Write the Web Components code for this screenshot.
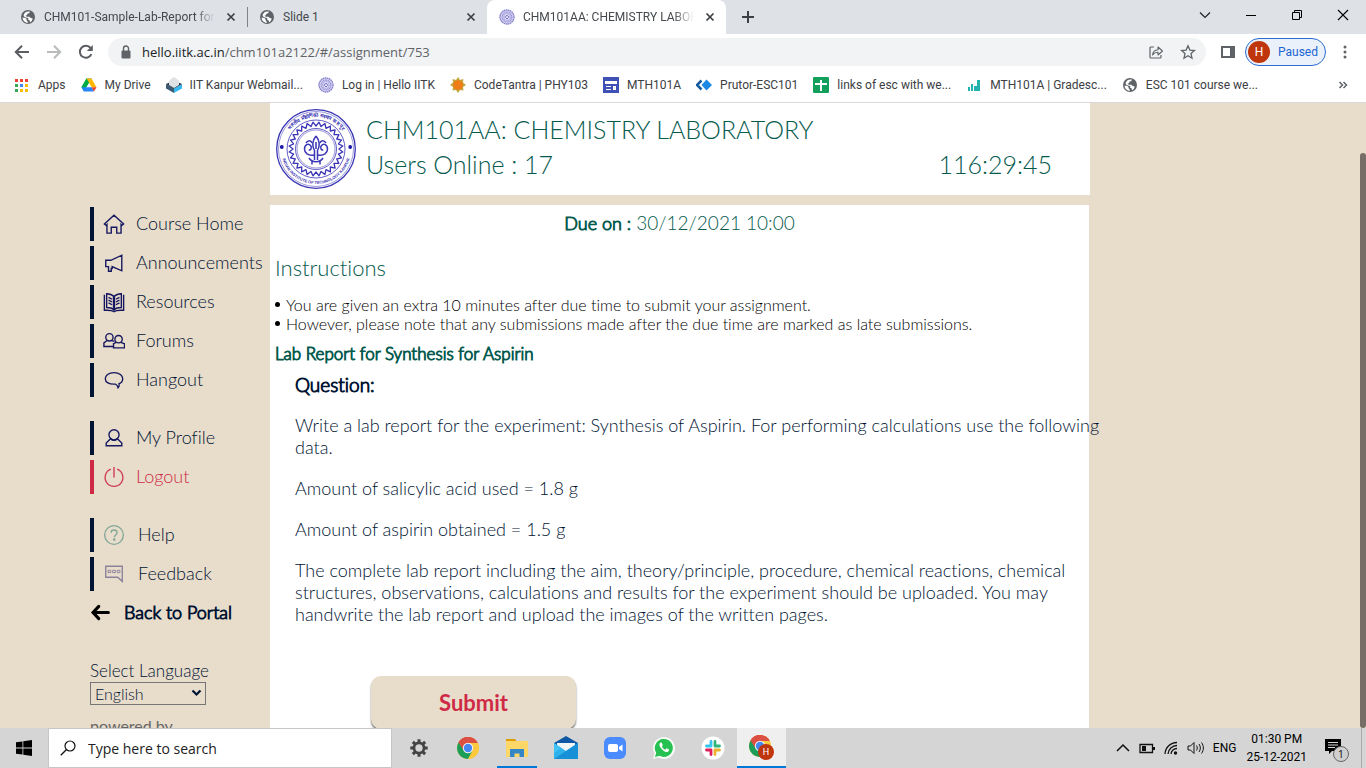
<!DOCTYPE html>
<html lang="en">
<head>
<meta charset="utf-8">
<title>CHM101AA: CHEMISTRY LABORATORY</title>
<style>
  html, body { margin: 0; height: 100%; }
  body { font-family: Roboto, "Open Sans", sans-serif; font-size: 12px; overflow: hidden; }
</style>
</head>
<body>
<desktop-screen></desktop-screen>

<script>
const GLOBE = '<circle cx="8" cy="8" r="7" fill="#5f6368"/><path d="M2.6 8.6c1.2.3 2.5.2 3.4.9.8.6.2 1.500 1 2.200.6.600.9 1.300.7 2.200C4.800 13.700 2.600 11.500 2.600 8.600ZM5.200 3.500 C6.400 2.600 8.500 2.200 10 2.700 L9 4.200 7.300 4.800 7 6.300 5.600 6.500 6.600 7.800 9.200 7.700 10.800 9.100 12.700 9.400C12.300 11.300 11.300 12.600 10 13.200 L9.700 11.600 8 10.400 8.400 9 5.700 8.400 3.800 7.300 3.700 5.500Z" fill="#fff"/>';
const MINI_SEAL = '<circle cx="8" cy="8" r="7.500" fill="#d4d1f0"/><circle cx="8" cy="8" r="7" fill="none" stroke="#8680cc" stroke-width="1.300" stroke-dasharray="1.500 .6"/><circle cx="8" cy="8" r="4.800" fill="none" stroke="#8f8ad4" stroke-width="1.200" stroke-dasharray="1 .6"/><circle cx="8" cy="8" r="3.300" fill="#eceafa" stroke="#8f8ad4" stroke-width=".6"/><path d="M6.200 9V7.600L8 6.400l1.800 1.200V9M7 9.500h2" fill="none" stroke="#6d66bd"/>';
const CHROME = '<circle cx="12" cy="12" r="11" fill="#fbc93d"/><path d="M12 12 L2.500 6.500A11 11 0 0 1 21.500 6.500Z" fill="#dc5044"/><path d="M12 12L2.500 6.500A11 11 0 0 0 12 23l5-8.500Z" fill="#1c9d58"/><path d="M12 7h9.800A11 11 0 0 1 12 23l4.500-8.300Z" fill="#fbc93d"/><path d="M12 7h9.800A11 11 0 0 0 2.500 6.500L7.600 14.500Z" fill="#dc5044"/><circle cx="12" cy="12" r="5.200" fill="#f4f4f4"/><circle cx="12" cy="12" r="4.200" fill="#4587f3"/>';
const ICONS = {
  globe: [16, GLOBE],
  miniseal: [16, MINI_SEAL],
  cross: [16, '<path d="M4.500 4.500l7 7m0-7l-7 7" stroke="#3c4043" stroke-width="1.700" fill="none"/>'],
  plus: [16, '<path d="M8 2v12M2 8h12" stroke="#3c4043" stroke-width="2" fill="none"/>'],
  down: [16, '<path d="M3 5.500l5 5 5-5" stroke="#222" stroke-width="1.200" fill="none"/>'],
  minimise: [16, '<path d="M3 8.500h10" stroke="#000" fill="none"/>'],
  restore: [16, '<path d="M3.500 5.500h7v7h-7zM5.500 5.500v-2h7v7h-2" stroke="#000" fill="none"/>'],
  shut: [16, '<path d="M3 3l10 10M13 3L3 13" stroke="#000" stroke-width="1.100" fill="none"/>'],
  back: [16, '<path d="M15 8H2.500M8 1.800L1.800 8 8 14.200" stroke="#5a5d61" stroke-width="2" fill="none"/>'],
  forward: [16, '<path d="M1 8h12.500M8 1.800L14.200 8 8 14.200" stroke="#b8babc" stroke-width="2" fill="none"/>'],
  reload: [16, '<path d="M13.400 10.200A6 6 0 1 1 12.600 4" stroke="#5a5d61" stroke-width="2" fill="none"/><path d="M14.800 1v6H8.800z" fill="#5a5d61"/>'],
  lock: [16, '<rect x="3.500" y="6.500" width="9" height="8" rx="1" fill="#5f6368"/><path d="M5.500 7V4.500a2.500 2.500 0 0 1 5 0V7" stroke="#5f6368" stroke-width="1.400" fill="none"/>'],
  share: [16, '<path d="M6 3H3a1 1 0 0 0-1 1v9a1 1 0 0 0 1 1h9a1 1 0 0 0 1-1v-2" stroke="#5f6368" stroke-width="1.200" fill="none"/><path d="M4.500 11C5 7.500 7 6 10 5.800V3l4.500 4-4.500 4V8.300C7.500 8.300 6 9 4.500 11Z" stroke="#5f6368" stroke-width="1.100" fill="none" stroke-linejoin="round"/>'],
  star: [16, '<path d="M8 1.800l1.900 4.300 4.600.4-3.500 3.100 1 4.600L8 11.800l-4 2.400 1-4.600L1.500 6.500l4.600-.4Z" stroke="#5f6368" stroke-width="1.300" fill="none"/>'],
  panel: [16, '<path d="M1 2h14v12H1z" fill="#5f6368"/><path d="M3 4h7v8H3z" fill="#fff"/>'],
  dots: [16, '<circle cx="8" cy="3" r="1.500" fill="#5f6368"/><circle cx="8" cy="8" r="1.500" fill="#5f6368"/><circle cx="8" cy="13" r="1.500" fill="#5f6368"/>'],
  more: [16, '<path d="M4.500 5l3 3-3 3M8.500 5l3 3-3 3" stroke="#5f6368" stroke-width="1.500" fill="none"/>'],
  apps: [16, '<path d="M1 2h3v3H1zM6 2h3v3H6zM11 2h3v3h-3zM1 7h3v3H1z" fill="#ea4335"/><path d="M1 7h3v3H1zM1 12h3v3H1z" fill="#34a853"/><path d="M6 7h3v3H6z" fill="#4285f4"/><path d="M6 12h3v3H6zM11 12h3v3h-3zM11 7h3v3h-3z" fill="#fbbc05"/>'],
  drive: [16, '<path d="M5.500 1.500L8 5.900 3 14.500.500 10.200Z" fill="#00ac47"/><path d="M5.500 1.500h5L8 5.900Z" fill="#00832d"/><path d="M10.500 1.500l5 8.700h-5L5.500 1.500Z" fill="#ffba00"/><path d="M5.500 1.500L8 5.900l-2.500 4.300H.500Z" fill="#00ac47"/><path d="M8 5.900l2.500 4.300h-5Z" fill="#fff"/><path d="M.500 10.200h10L13 14.500H3Z" fill="#2684fc"/><path d="M10.500 10.200h5L13 14.500Z" fill="#ea4335"/>'],
  webmail: [16, '<path d="M0 7l8 4v5L0 11.500Z" fill="#3d5a73"/><path d="M16 7l-8 4v5l8-4.500Z" fill="#38b6ee"/><path d="M0 7l8-3.500L16 7l-8 4.500Z" fill="#2b3742"/><path d="M3 3.500L8 0l5 3.500V8l-5 3-5-3Z" fill="#dfe2e4"/>'],
  sun: [16, '<path d="M8 0l2 3 3.500-1L13 5.500l3 2.500-3 2 .5 3.500-3.500-.5-2 3-2-3-3.500.5L3 10 0 8l3-2.500L2.500 2 6 3Z" fill="#c2a63c"/><circle cx="8" cy="8" r="4.800" fill="#ef7d17"/>'],
  sites: [16, '<path d="M0 0h16v16H0z" fill="#3f51b5"/><path d="M2 4h12v3H2zM3 9h5v1H3zM10 9h3v4h-3zM3 12h5v1H3z" fill="#fff"/>'],
  prutor: [16, '<path d="M5.500 3.500L1 8l4.500 4.500" stroke="#165b9c" stroke-width="2.500"/><path d="M10.500 2.500L16 8l-5.500 5.500L5.500 8Z" fill="#1e88e5"/>'],
  sheets: [16, '<rect width="16" height="16" rx="1" fill="#12a05c"/><path d="M7 3h2v11H7zM2 6h12v2H2z" fill="#fff"/>'],
  bars: [16, '<path d="M2 10h2v4H2zM5 7h2v7H5zM8 9h3v5H8zM11 3h3v11h-3z" fill="#25b1ad"/>'],
  home: [24, '<path d="M1.500 12L12 2.500 22.500 12l-1.800 1.500-1-1V22H15v-6.500H9V22H4.300v-9.500l-1 1Z"/>'],
  horn: [24, '<path d="M3 9h5.500L20.500 3.500v17L10 16v2H9v3H6v-5H3Z"/>'],
  book: [24, '<path d="M4 3v15c3 0 6 .5 8 2.500 2-2 5-2.500 8-2.500V3c-3 0-6 1-8 3-2-2-5-3-8-3ZM1.500 4v17c4 0 8-.5 10.500 1.500C14.500 20.500 18.500 21 22.500 21V4M6 7l4 2M6 10l4 2M6 13l4 2M18 7l-4 2M18 10l-4 2M18 13l-4 2"/><path d="M12 6v14" stroke-width="2.500"/>'],
  people: [24, '<circle cx="7" cy="8" r="4"/><path d="M4.500 11.500L1 14v4h10M9.500 11.500l3 1"/><circle cx="17" cy="10" r="4"/><path d="M14.500 13.500L11.500 15v4.500h12V15L19.500 13.500"/>'],
  chat: [24, '<path d="M12 4c6 0 9.500 3 9.500 6.500 0 2.500-1.500 4.500-4 5.500.5 1.500.5 3-1 4.500-.5-2-1.500-3.500-3-4-7 .5-11-2-11-6C2.500 7 6 4 12 4Z"/>'],
  person: [24, '<circle cx="12" cy="8.500" r="5.500"/><path d="M8.500 12.500l-5 5V20.500h17v-3l-5-5M8.500 13c2 2 5 2 7 0"/>'],
  power: [24, '<path d="M8.500 3.500a9.700 9.700 0 1 0 7 0M12 1v11.500"/>'],
  help: [24, '<circle cx="12" cy="12" r="10.200"/><path d="M8.800 9.500C8.800 7.500 10 6.500 12 6.500s3.300 1.300 3.300 3c0 2.500-3 2.500-3 5"/><circle cx="12.200" cy="17" r=".7"/>'],
  feedback: [24, '<path d="M3 3.500h18V20l-5-4.500H3Z"/><path d="M5.500 8h3v2.500h-3zM10.500 8h3v2.500h-3zM15.500 8h3v2.500h-3z" stroke-width="1"/>'],
  arrowleft: [24, '<path d="M21 12H4M10 5L3.500 12l6.500 7" stroke-width="3.500" stroke-linecap="round"/>'],
  windows: [16, '<path d="M0 2.300l6.500-.9v6.200H0zM7.300 1.300L16 0v7.600H7.300zM0 8.400h6.500v6.200L0 13.700zM7.300 8.400H16V16l-8.700-1.200z" fill="#000"/>'],
  search: [16, '<circle cx="10" cy="6" r="5" stroke="#111" stroke-width="1.200" fill="none"/><path d="M6.500 9.500L.8 15.200" stroke="#111" stroke-width="1.300"/>'],
  gear: [24, '<circle cx="12" cy="12" r="5.500" stroke="#444" stroke-width="3" fill="none"/><path d="M12 2.500V6M12 18v3.500M2.500 12H6M18 12h3.500M5.300 5.300l2.500 2.500M16.200 16.200l2.500 2.500M18.700 5.300l-2.500 2.500M7.800 16.200l-2.500 2.500" stroke="#444" stroke-width="3.200"/>'],
  chrome: [24, CHROME],
  folder: [24, '<path d="M1 3h9l2 3H1z" fill="#e09b00"/><path d="M1 5h22v16H1z" fill="#ffd768"/><path d="M5 21v-8h14v8h-4.500v-3.500h-5V21z" fill="#3486c7"/>'],
  mail: [24, '<path d="M12 0l12 7v4H0V7Z" fill="#0f58a5"/><path d="M3 7h18v8H3z" fill="#f3f5f6"/><path d="M0 7l12 8 12-8v16H0Z" fill="#2fb1ec"/><path d="M0 23L24 7v16Z" fill="#1790d8"/><path d="M0 7l7 5L0 17Z" fill="#41c4f4"/>'],
  zoom: [24, '<rect x="1" y="1" width="22" height="22" rx="6" fill="#4a8cff"/><rect x="5" y="8" width="10" height="8" rx="2" fill="#fff"/><path d="M16 11l3.500-2.500v7L16 13Z" fill="#fff"/>'],
  whatsapp: [24, '<path d="M1 23l1.500-5.500A11 11 0 1 1 6.500 21.500Z" fill="#f6fbf6"/><path d="M3 21l1.200-4.300A9 9 0 1 1 7.500 19.800Z" fill="#27c151"/><path d="M8.500 6.500c-1.500 1-1.500 3 .3 5.400s4.500 4.500 6.500 4c1.500-.5 1.900-1.700 1.700-2.400l-2.400-1.200-1.200 1.400c-1.500-.6-2.800-1.700-3.500-3.200l.9-1.100-1-2.600Z" fill="#fff"/>'],
  slack: [24, '<circle cx="12" cy="12" r="11.500" fill="#fff"/><g stroke-width="2.800" stroke-linecap="round"><path d="M10 5.500V10M5.500 10H10" stroke="#36c5f0"/><path d="M14 5.500V10M14 10h4.500" stroke="#2eb67d"/><path d="M14 14v4.500M14 14h4.500" stroke="#ecb22e"/><path d="M10 14v4.500M5.500 14H10" stroke="#e01e5a"/></g>'],
  chromeuser: [28, '<g>' + CHROME + '</g><circle cx="18" cy="18" r="8" fill="#bf360c"/><text x="18" y="21" font-family="Roboto, sans-serif" font-size="9" text-anchor="middle" fill="#fff">H</text>'],
  up: [16, '<path d="M2 11l6-6 6 6" stroke="#111" stroke-width="1.500" fill="none"/>'],
  battery: [16, '<path d="M1 4.500h12.500v8H1z" stroke="#111" stroke-width="1.300" fill="none"/><path d="M3 6h4v5H3zM14 7h2v3h-2z" fill="#111"/>'],
  wifi: [16, '<path d="M2 14A12 12 0 0 1 14 2.500M5 14a9 9 0 0 1 9-8.500M8 14a6 6 0 0 1 6-5.500" stroke="#111" stroke-width="1.300" fill="none"/><circle cx="12.500" cy="13" r="1.700" fill="#111"/>'],
  sound: [18, '<path d="M1 7h2.500L7 3.500v11L3.500 11H1Z" stroke="#111" fill="none"/><path d="M9.500 6.500c1 1.500 1 3.500 0 5M12 5c1.800 2.500 1.800 5.500 0 8M14.500 3.500c2.500 3.500 2.500 7.500 0 11" stroke="#111" fill="none"/>'],
  notice: [28, '<path d="M2 5h16v12h-9L6 20v-3H2Z" fill="#000"/><path d="M5 8.500h10M5 11h10M5 13.500h7" stroke="#d5d5d5"/><circle cx="18" cy="20" r="7.500" fill="#cfcfcf" stroke="#666"/><text x="18" y="24" font-family="Open Sans, sans-serif" font-size="11" text-anchor="middle" fill="#111">1</text>']
};

function define(name, markup) {
  customElements.define(name, class extends HTMLElement {
    connectedCallback() {
      if (this.shadowRoot) return;
      const root = this.attachShadow({ mode: 'open' });
      root.innerHTML = typeof markup === 'function' ? markup(this) : markup;
    }
  });
}

/* A square line or colour icon; "size" sets its side in pixels. */
define('ui-icon', el => {
  const [box, body] = ICONS[el.getAttribute('name')];
  const size = el.getAttribute('size') || box;
  return `<style>
    :host { display: inline-flex; flex: none; }
    svg { display: block; fill: none; stroke: none; }
    svg.line { stroke: currentColor; stroke-width: 1.500; }
  </style><svg class="${el.hasAttribute('line') ? 'line' : ''}" width="${size}" height="${size}" viewBox="0 0 ${box} ${box}" aria-hidden="true">${body}</svg>`;
});

define('browser-tab', el => `<style>
  :host { display: flex; align-items: center; flex: 0 1 239px; min-width: 0; height: 34px; padding: 0 8px 0 11px; box-sizing: border-box; gap: 8px; color: #45494d; }
  :host([first]) { flex-basis: 247px; padding-left: 20px; }
  :host([active]) { background: #fff; border-radius: 8px 8px 0 0; padding-left: 12px; }
  span { flex: 1; overflow: hidden; white-space: nowrap; }
  :host([fade]) span { -webkit-mask-image: linear-gradient(90deg, #000 88%, transparent); mask-image: linear-gradient(90deg, #000 88%, transparent); }
  button { border: 0; background: none; padding: 0; display: flex; }
</style><ui-icon name="${el.getAttribute('icon')}"></ui-icon><span><slot></slot></span><button aria-label="Close tab"><ui-icon name="cross"></ui-icon></button>`);

define('tab-strip', `<style>
  :host { display: flex; align-items: center; height: 34px; background: #dee1e6; }
  .sep { width: 1px; height: 20px; background: #808488; }
  button { border: 0; background: none; padding: 0; display: flex; }
  .new { margin-left: 14px; }
  .win { margin-left: auto; display: flex; gap: 30px; padding: 0 15px 5px 0; }
</style>
<browser-tab icon="globe" first fade>CHM101-Sample-Lab-Report for</browser-tab>
<div class="sep"></div>
<browser-tab icon="globe">Slide 1</browser-tab>
<browser-tab icon="miniseal" active fade>CHM101AA: CHEMISTRY LABORATORY</browser-tab>
<button class="new" aria-label="New tab"><ui-icon name="plus"></ui-icon></button>
<div class="win">
  <button aria-label="Search tabs"><ui-icon name="down"></ui-icon></button>
  <button aria-label="Minimise"><ui-icon name="minimise"></ui-icon></button>
  <button aria-label="Restore"><ui-icon name="restore"></ui-icon></button>
  <button aria-label="Close"><ui-icon name="shut"></ui-icon></button>
</div>`);

define('tool-bar', `<style>
  :host { display: flex; align-items: center; height: 36px; background: #fff; padding: 0 14px; gap: 16px; }
  button { border: 0; background: none; padding: 0; display: flex; align-items: center; }
  .omni { flex: 1; display: flex; align-items: center; height: 28px; border-radius: 14px; background: #f1f3f4; padding: 0 10px; gap: 8px; margin: 0 -2px; }
  .url { flex: 1; position: relative; display: flex; align-items: center; height: 28px; font: 13px "Open Sans", sans-serif; }
  .url input { position: absolute; inset: 0; width: 100%; border: 0; padding: 0; background: none; font: inherit; color: transparent; }
  .url span { color: #5f6368; white-space: nowrap; pointer-events: none; }
  .url b { font-weight: 400; color: #202124; }
  .share { margin-right: 8px; }
  .me { height: 28px; border: 1px solid #2b6bd0; border-radius: 14px; background: #ebf1fb; color: #1a66d2; font: 12px Roboto, sans-serif; padding: 0 8px 0 2px; gap: 8px; margin: 0 -5px 0 -7px; width: 81px; box-sizing: border-box; }
  .me i { font-style: normal; width: 22px; height: 22px; border-radius: 50%; background: #bf360c; color: #fff; line-height: 22px; text-align: center; flex: none; }
  .menu { margin-right: -1px; }
</style>
<button aria-label="Back"><ui-icon name="back"></ui-icon></button>
<button aria-label="Forward"><ui-icon name="forward"></ui-icon></button>
<button aria-label="Reload"><ui-icon name="reload"></ui-icon></button>
<div class="omni">
  <ui-icon name="lock"></ui-icon>
  <label class="url"><span><b>hello.iitk.ac.in</b>/chm101a2122/#/assignment/753</span><input type="text" aria-label="Address"></label>
  <button class="share" aria-label="Share"><ui-icon name="share"></ui-icon></button>
  <button aria-label="Bookmark"><ui-icon name="star"></ui-icon></button>
</div>
<button aria-label="Side panel"><ui-icon name="panel"></ui-icon></button>
<button class="me"><i>H</i>Paused</button>
<button class="menu" aria-label="Menu"><ui-icon name="dots"></ui-icon></button>`);

define('bookmark-link', el => `<style>
  :host { display: block; flex: none; }
  a { display: flex; align-items: center; gap: 8px; color: #3c4043; text-decoration: none; white-space: nowrap; }
</style><a href="#"><ui-icon name="${el.getAttribute('icon')}"></ui-icon><span><slot></slot></span></a>`);

define('bookmark-bar', `<style>
  :host { display: flex; align-items: center; gap: 15px; height: 33px; padding: 0 15px 3px 14px; background: #fff; border-bottom: 1px solid #d8dadd; box-sizing: border-box; }
  button { border: 0; background: none; padding: 0; margin-left: auto; display: flex; }
</style>
<bookmark-link icon="apps">Apps</bookmark-link>
<bookmark-link icon="drive">My Drive</bookmark-link>
<bookmark-link icon="webmail">IIT Kanpur Webmail...</bookmark-link>
<bookmark-link icon="miniseal">Log in | Hello IITK</bookmark-link>
<bookmark-link icon="sun">CodeTantra | PHY103</bookmark-link>
<bookmark-link icon="sites">MTH101A</bookmark-link>
<bookmark-link icon="prutor">Prutor-ESC101</bookmark-link>
<bookmark-link icon="sheets">links of esc with we...</bookmark-link>
<bookmark-link icon="bars">MTH101A | Gradesc...</bookmark-link>
<bookmark-link icon="globe">ESC 101 course we...</bookmark-link>
<button aria-label="More bookmarks"><ui-icon name="more"></ui-icon></button>`);

define('nav-item', el => `<style>
  :host { display: block; color: #001433; }
  :host([tone=red]) { color: #cf2a45; }
  a { display: flex; align-items: center; gap: 11px; height: 34px; box-sizing: border-box; padding-left: 9px; border-left: 4px solid currentColor; color: inherit; text-decoration: none; font-size: 18px; white-space: nowrap; }
  :host([wide]) a { gap: 13px; }
  span { padding-bottom: 2px; }
  ui-icon { color: ${el.getAttribute('ink') || '#14175f'}; }
</style><a href="#"><ui-icon line size="22" name="${el.getAttribute('icon')}"></ui-icon><span><slot></slot></span></a>`);

define('language-picker', `<style>
  :host { display: flex; flex-direction: column; align-items: flex-start; font-size: 17px; line-height: 22px; color: #001433; }
  .box { position: relative; width: 116px; }
  select { appearance: none; width: 100%; height: 23px; border: 1px solid #767676; border-radius: 0; background: transparent; padding: 0 4px; color: inherit; font: 300 16px Lato, sans-serif; display: block; }
  svg { position: absolute; right: 4px; top: 7px; pointer-events: none; }
  p { margin: 10px 0 0; font-size: 16px; font-weight: 400; color: #666; }
</style>
<label for="lang">Select Language</label>
<div class="box"><select id="lang"><option>English</option></select>
<svg width="11" height="8" viewBox="0 0 11 8"><path d="M1.500 1.500l4 4 4-4" fill="none" stroke="#001433" stroke-width="2.200"/></svg></div>
<p>powered by</p>`);

define('side-nav', `<style>
  :host { display: block; padding-top: 104px; }
  nav { display: grid; gap: 5px; margin-bottom: 24px; }
  nav:last-of-type { margin-bottom: 4px; }
  .portal { display: flex; align-items: center; gap: 13px; height: 34px; color: #001433; text-decoration: none; font-size: 18px; -webkit-text-stroke: 1px currentColor; white-space: nowrap; }
  .portal ui-icon { color: #000; }
  language-picker { margin-top: 31px; }
</style>
<nav aria-label="Course">
  <nav-item icon="home">Course Home</nav-item>
  <nav-item icon="horn">Announcements</nav-item>
  <nav-item icon="book">Resources</nav-item>
  <nav-item icon="people">Forums</nav-item>
  <nav-item icon="chat">Hangout</nav-item>
</nav>
<nav aria-label="Account">
  <nav-item icon="person">My Profile</nav-item>
  <nav-item icon="power" tone="red" ink="#cf3d52">Logout</nav-item>
</nav>
<nav aria-label="Support">
  <nav-item icon="help" wide ink="#82a898">Help</nav-item>
  <nav-item icon="feedback" wide ink="#8c829b">Feedback</nav-item>
</nav>
<a class="portal" href="#"><ui-icon line size="21" name="arrowleft"></ui-icon>Back to Portal</a>
<language-picker></language-picker>`);

/* Institute seal: lettered ring, toothed gear and the emblem in the middle. */
define('course-seal', () => {
  const n = 28, pts = [];
  for (let i = 0; i < n * 2; i++) {
    const a = Math.PI * i / n, r = i % 2 ? 27 : 23;
    pts.push((40 + r * Math.cos(a)).toFixed(1) + ',' + (40 + r * Math.sin(a)).toFixed(1));
  }
  return `<style>
    :host { display: block; flex: none; }
    svg { display: block; }
    text { font-family: "Liberation Sans", sans-serif; font-weight: 700; fill: #3a35b4; }
  </style>
  <svg width="80" height="80" viewBox="0 0 80 80" fill="none" stroke="#3a35b4" role="img" aria-label="IIT Kanpur seal">
    <circle cx="40" cy="40" r="39.300" stroke-width="1.300"/><circle cx="40" cy="40" r="37.500" stroke-width=".5"/>
    <circle cx="40" cy="40" r="29" stroke-width=".8"/>
    <polygon points="${pts.join(' ')}" stroke-width="1.300" stroke-linejoin="round"/>
    <circle cx="40" cy="40" r="20.500" stroke-width=".8"/><circle cx="40" cy="40" r="19" stroke-width=".5"/>
    <circle cx="5.800" cy="38" r="1.900" fill="#1c16a8" stroke="none"/><circle cx="74.200" cy="38" r="1.900" fill="#1c16a8" stroke="none"/>
    <g stroke-width="1.500"><path d="M40 27c-4 5-4 10-1.500 14.500V51M40 27c4 5 4 10 1.500 14.500V51"/>
    <path d="M38 46c-6 1-9.500-2-9.500-6 0-4.500 4-6 6-3.500s0 5-1.800 4.500M30 34c2-3 5-3 6 0M42 46c6 1 9.500-2 9.500-6 0-4.500-4-6-6-3.500s0 5 1.800 4.500M50 34c-2-3-5-3-6 0M33 49c3 5 11 5 14 0M36 51.500v4M44 51.500v4M40 33v7"/></g>
    <defs><path id="top" d="M8 40A32 32 0 0 1 72 40"/><path id="low" d="M5 40A35 35 0 0 0 75 40"/></defs>
    <g stroke="none"><text font-size="5"><textPath href="#top" startOffset="50%" text-anchor="middle">भारतीय प्रौद्योगिकी संस्थान कानपुर</textPath></text>
    <text font-size="4"><textPath href="#low" startOffset="50%" text-anchor="middle">INDIAN INSTITUTE OF TECHNOLOGY KANPUR</textPath></text></g>
  </svg>`;
});

define('course-header', `<style>
  :host { display: flex; gap: 10px; background: #fff; padding: 6px 38px 6px 6px; color: #055a4e; font-size: 25px; line-height: 35px; box-sizing: border-box; }
  .text { flex: 1; padding-top: 3px; }
  h1 { margin: 0; font: inherit; }
  .row { display: flex; justify-content: space-between; }
</style>
<course-seal></course-seal>
<div class="text"><h1>CHM101AA: CHEMISTRY LABORATORY</h1>
<div class="row"><span>Users Online : 17</span><time>116:29:45</time></div></div>`);

define('assignment-card', `<style>
  :host { display: block; background: #fff; margin-right: 1px; padding: 5px 5px 40px; color: #055a4e; }
  .due { margin: 0; text-align: center; font-size: 19px; line-height: 26px; }
  .due, h2, h3, h4 { font-weight: 300; }
  b { font-weight: 300; font-size: 18px; }
  b, h3, h4 { -webkit-text-stroke: 1px currentColor; }
  h2 { margin: 18px 0 0; font-size: 22px; line-height: 28px; }
  ul { list-style: none; margin: 13px 0 0; padding: 0; color: #000; font-size: 16px; line-height: 19px; }
  li { display: flex; align-items: center; gap: 6px; }
  li::before { content: ""; width: 5px; height: 5px; border-radius: 50%; background: currentColor; }
  h3 { margin: 10px 0 0; font-size: 17px; line-height: 22px; }
  section { margin-left: 20px; margin-right: -20px; color: #001433; font-size: 18px; line-height: 22px; }
  h4 { margin: 9px 0 0; font-size: 19px; line-height: 22px; }
  p { margin: 19px 0 0; }
  h4 + p { margin-top: 18px; }
  button { display: block; margin: 51px 0 0 96px; width: 205px; height: 53px; border: 0; border-radius: 10px; background: #e8dccb; box-shadow: 0 2px 2px #777; color: #cf2a45; font: 700 22px Lato, sans-serif; }
</style>
<p class="due"><b>Due on :</b> 30/12/2021 10:00</p>
<h2>Instructions</h2>
<ul><li>You are given an extra 10 minutes after due time to submit your assignment.</li>
<li>However, please note that any submissions made after the due time are marked as late submissions.</li></ul>
<h3>Lab Report for Synthesis for Aspirin</h3>
<section>
  <h4>Question:</h4>
  <p>Write a lab report for the experiment: Synthesis of Aspirin. For performing calculations use the following data.</p>
  <p>Amount of salicylic acid used = 1.8 g</p>
  <p>Amount of aspirin obtained = 1.5 g</p>
  <p>The complete lab report including the aim, theory/principle, procedure, chemical reactions, chemical structures, observations, calculations and results for the experiment should be uploaded. You may handwrite the lab report and upload the images of the written pages.</p>
</section>
<button type="button">Submit</button>`);

define('course-page', `<style>
  :host { display: flex; flex: 1; min-height: 0; overflow: hidden; background: #e8dccb; font: 300 18px Lato, sans-serif; font-variant-ligatures: none; }
  .scroll { flex: 1; min-width: 0; }
  .grid { display: grid; grid-template-columns: 180px minmax(0, 1fr) 180px; max-width: 1180px; margin: 0 auto; }
  main { display: grid; align-content: start; gap: 10px; }
  .bar { width: 6px; padding-top: 50px; display: flex; }
  .bar i { flex: 1; background: #766e66; border-radius: 3px; }
</style>
<div class="scroll"><div class="grid"><side-nav></side-nav><main><course-header></course-header><assignment-card></assignment-card></main></div></div>
<div class="bar"><i></i></div>`);

define('task-bar', `<style>
  :host { display: flex; height: 40px; background: #d5d5d5; color: #000; font: 12px Roboto, sans-serif; }
  button { border: 0; padding: 0; background: none; display: flex; align-items: center; justify-content: center; color: inherit; }
  .start { width: 48px; }
  .find { display: flex; align-items: center; gap: 12px; width: 344px; box-sizing: border-box; padding: 0 11px; background: #fff; border: 1px solid #c6c6c6; }
  .find input { flex: 1; min-width: 0; border: 0; padding: 0; background: none; font: 14px "Open Sans", sans-serif; }
  .find input::placeholder { color: #222; opacity: 1; }
  .apps { display: flex; margin-left: 2px; }
  .apps button { width: 49px; height: 40px; box-sizing: border-box; }
  .apps .open { background: linear-gradient(#0078d7, #0078d7) center bottom / 40px 2px no-repeat; }
  .apps .on { background: linear-gradient(#0078d7, #0078d7) bottom / 100% 2px no-repeat #efefef; }
  .tray { display: flex; align-items: center; gap: 8px; margin-left: auto; padding-right: 10px; }
  .clock { line-height: 18px; text-align: center; margin: 0 8px 0 2px; }
  .edge { width: 4px; border-left: 1px solid #aaa; }
</style>
<button class="start" aria-label="Start"><ui-icon name="windows"></ui-icon></button>
<label class="find"><ui-icon name="search"></ui-icon><input type="text" placeholder="Type here to search" aria-label="Type here to search"></label>
<div class="apps">
  <button aria-label="Settings"><ui-icon name="gear" size="22"></ui-icon></button>
  <button aria-label="Chrome"><ui-icon name="chrome"></ui-icon></button>
  <button class="open" aria-label="Files"><ui-icon name="folder"></ui-icon></button>
  <button aria-label="Mail"><ui-icon name="mail"></ui-icon></button>
  <button aria-label="Zoom"><ui-icon name="zoom"></ui-icon></button>
  <button aria-label="WhatsApp"><ui-icon name="whatsapp"></ui-icon></button>
  <button aria-label="Slack"><ui-icon name="slack"></ui-icon></button>
  <button class="on" aria-label="Chrome, H"><ui-icon name="chromeuser"></ui-icon></button>
</div>
<div class="tray">
  <ui-icon name="up"></ui-icon><ui-icon name="battery"></ui-icon><ui-icon name="wifi"></ui-icon><ui-icon name="sound"></ui-icon>
  <span>ENG</span>
  <div class="clock">01:30 PM<br>25-12-2021</div>
  <button aria-label="Notifications"><ui-icon name="notice"></ui-icon></button>
</div>
<div class="edge"></div>`);

define('desktop-screen', `<style>
  :host { display: flex; flex-direction: column; height: 100vh; }
  tab-strip, tool-bar, bookmark-bar, task-bar { flex: none; }
</style>
<tab-strip></tab-strip><tool-bar></tool-bar><bookmark-bar></bookmark-bar><course-page></course-page><task-bar></task-bar>`);
</script>
</body>
</html>
